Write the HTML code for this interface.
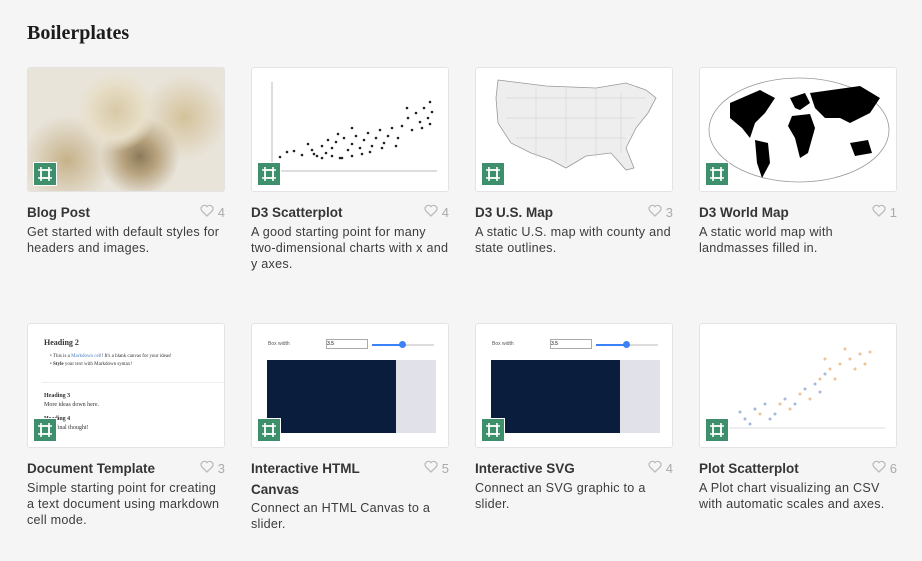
<!DOCTYPE html>
<html><head><style>
body{margin:0;background:#f5f5f5;font-family:"Liberation Sans",sans-serif;width:922px;height:561px;overflow:hidden;position:relative}
h1{position:absolute;left:27px;top:22px;margin:0;font-family:"Liberation Serif",serif;font-size:20px;font-weight:bold;color:#1b1b1b}
.card{position:absolute;width:198px}
.img{position:relative;width:198px;height:125px;border:1px solid #e3e3e3;border-radius:3px;background:#fff;overflow:hidden;box-sizing:border-box}
.ic{position:absolute;left:5px;bottom:5px;width:22px;height:22px;background:#3e8f6c;border:1px solid #fff}
.t{display:flex;justify-content:space-between;margin-top:10px;font-size:13.5px;font-weight:bold;color:#353535;line-height:21px}
.t span.h{font-weight:normal;color:#aaa;font-size:13px;white-space:nowrap}
.d{font-size:12.6px;letter-spacing:0.25px;color:#3c3c3c;line-height:16px;margin-top:1px}
</style></head><body>
<h1>Boilerplates</h1>
<svg width="0" height="0" style="position:absolute"><defs><symbol id="g" viewBox="0 0 22 22"><path d="M7 4v14M15 4v14M4 7h14M4 15h14" stroke="#fff" stroke-width="1.6" fill="none"/><rect x="7" y="7" width="8" height="8" fill="none" stroke="#fff" stroke-width="1.6"/></symbol><symbol id="hh" viewBox="0 0 14 13"><path d="M7 12 1.8 6.8A3 3 0 0 1 7 2.6a3 3 0 0 1 5.2 4.2Z" fill="none" stroke="#bbb" stroke-width="1.3"/></symbol></defs></svg>

<div class="card" style="left:27px;top:67px"><div class="img" style="background:radial-gradient(circle at 45% 35%,#d8c9a6 0,#e8dfc9 20%,transparent 30%),radial-gradient(circle at 20% 75%,#c6b28a 0,transparent 25%),radial-gradient(circle at 57% 72%,#8b7a5a 0,#b7a27d 12%,transparent 28%),radial-gradient(circle at 80% 40%,#d4c29b 0,transparent 25%),#e9e4da"><div class="ic"><svg width="22" height="22"><use href="#g"/></svg></div></div>
<div class="t">Blog Post<span class="h"><svg width="14" height="13"><use href="#hh"/></svg> 4</span></div><div class="d">Get started with default styles for headers and images.</div></div>

<div class="card" style="left:251px;top:67px"><div class="img"><svg width="198" height="125" style="position:absolute;left:0;top:0"><path d="M20 14V103H185" stroke="#bbb" fill="none"/><g fill="#222">
<circle cx="28" cy="89" r="1.3"/><circle cx="35" cy="84" r="1.3"/><circle cx="42" cy="83" r="1.3"/><circle cx="50" cy="87" r="1.3"/><circle cx="56" cy="76" r="1.3"/><circle cx="60" cy="82" r="1.3"/><circle cx="65" cy="88" r="1.3"/><circle cx="70" cy="78" r="1.3"/><circle cx="74" cy="85" r="1.3"/><circle cx="80" cy="80" r="1.3"/><circle cx="84" cy="74" r="1.3"/><circle cx="88" cy="90" r="1.3"/><circle cx="92" cy="70" r="1.3"/><circle cx="96" cy="82" r="1.3"/><circle cx="100" cy="76" r="1.3"/><circle cx="104" cy="68" r="1.3"/><circle cx="108" cy="80" r="1.3"/><circle cx="112" cy="72" r="1.3"/><circle cx="116" cy="65" r="1.3"/><circle cx="120" cy="78" r="1.3"/><circle cx="124" cy="70" r="1.3"/><circle cx="128" cy="62" r="1.3"/><circle cx="132" cy="75" r="1.3"/><circle cx="136" cy="68" r="1.3"/><circle cx="140" cy="60" r="1.3"/><circle cx="146" cy="70" r="1.3"/><circle cx="150" cy="58" r="1.3"/><circle cx="156" cy="50" r="1.3"/><circle cx="160" cy="62" r="1.3"/><circle cx="164" cy="45" r="1.3"/><circle cx="168" cy="54" r="1.3"/><circle cx="172" cy="40" r="1.3"/><circle cx="176" cy="50" r="1.3"/><circle cx="178" cy="34" r="1.3"/><circle cx="180" cy="44" r="1.3"/><circle cx="155" cy="40" r="1.3"/><circle cx="90" cy="90" r="1.3"/><circle cx="100" cy="88" r="1.3"/><circle cx="110" cy="86" r="1.3"/><circle cx="118" cy="84" r="1.3"/><circle cx="80" cy="88" r="1.3"/><circle cx="76" cy="72" r="1.3"/><circle cx="70" cy="90" r="1.3"/><circle cx="62" cy="86" r="1.3"/><circle cx="130" cy="80" r="1.3"/><circle cx="144" cy="78" r="1.3"/><circle cx="170" cy="60" r="1.3"/><circle cx="178" cy="56" r="1.3"/><circle cx="100" cy="60" r="1.3"/><circle cx="86" cy="66" r="1.3"/>
</g></svg><div class="ic"><svg width="22" height="22"><use href="#g"/></svg></div></div>
<div class="t">D3 Scatterplot<span class="h"><svg width="14" height="13"><use href="#hh"/></svg> 4</span></div><div class="d">A good starting point for many two-dimensional charts with x and y axes.</div></div>

<div class="card" style="left:475px;top:67px"><div class="img"><svg width="198" height="125" style="position:absolute;left:0;top:0"><path d="M22 12 70 18 120 20 150 15 170 22 180 30 172 45 160 60 150 80 158 100 150 102 135 85 110 88 90 100 75 92 55 85 35 75 22 55 20 30Z" fill="#eee" stroke="#999" stroke-width="0.8"/><path d="M30 30h140M30 50h130M40 70h110M60 20v70M90 20v75M120 20v70M145 25v60" stroke="#ccc" stroke-width="0.5"/></svg><div class="ic"><svg width="22" height="22"><use href="#g"/></svg></div></div>
<div class="t">D3 U.S. Map<span class="h"><svg width="14" height="13"><use href="#hh"/></svg> 3</span></div><div class="d">A static U.S. map with county and state outlines.</div></div>

<div class="card" style="left:699px;top:67px"><div class="img"><svg width="198" height="125" style="position:absolute;left:0;top:0"><ellipse cx="99" cy="62" rx="90" ry="52" fill="#fff" stroke="#999" stroke-width="0.8"/><g fill="#000"><path d="M30 35 60 22 75 30 65 45 55 55 50 70 42 60 30 50Z"/><path d="M55 72 68 75 70 95 62 110 57 95Z"/><path d="M90 30 105 25 110 35 100 42 95 40Z"/><path d="M92 48 110 46 115 60 108 85 100 90 95 70 88 58Z"/><path d="M110 25 160 18 180 30 170 45 150 55 140 50 125 50 115 40Z"/><path d="M150 75 168 72 172 85 155 88Z"/></g></svg><div class="ic"><svg width="22" height="22"><use href="#g"/></svg></div></div>
<div class="t">D3 World Map<span class="h"><svg width="14" height="13"><use href="#hh"/></svg> 1</span></div><div class="d">A static world map with<br>landmasses filled in.</div></div>

<div class="card" style="left:27px;top:323px"><div class="img" style="font-family:'Liberation Serif',serif;color:#333"><div style="position:absolute;left:16px;top:14px;font-size:8px;font-weight:bold">Heading 2</div><div style="position:absolute;left:22px;top:29px;font-size:5px;line-height:8px">• This is a <span style="color:#4a7fc0">Markdown cell</span>! It's a blank canvas for your ideas!<br>• <b>Style</b> your text with Markdown syntax!</div><div style="position:absolute;left:14px;right:0;top:58px;border-top:1px solid #eee"></div><div style="position:absolute;left:16px;top:68px;font-size:6px;line-height:9px"><b>Heading 3</b><br>More ideas down here.<br><br><b style="position:relative;top:-4px">Heading 4</b><br><span style="position:relative;top:-4px">… a final thought!</span></div><div class="ic"><svg width="22" height="22"><use href="#g"/></svg></div></div>
<div class="t">Document Template<span class="h"><svg width="14" height="13"><use href="#hh"/></svg> 3</span></div><div class="d">Simple starting point for creating a text document using markdown cell mode.</div></div>

<div class="card" style="left:251px;top:323px"><div class="img"><div style="position:absolute;left:16px;top:17px;font-size:5px;color:#555">Box width</div><div style="position:absolute;left:74px;top:15px;width:40px;height:8px;border:1px solid #aaa;font-size:5px;line-height:8px">3.5</div><div style="position:absolute;left:120px;top:20px;width:62px;height:2px;background:#ddd"></div><div style="position:absolute;left:120px;top:20px;width:30px;height:2px;background:#3b82f6"></div><div style="position:absolute;left:147px;top:17px;width:7px;height:7px;border-radius:50%;background:#3b82f6"></div><div style="position:absolute;left:15px;top:36px;width:169px;height:73px;background:#e1e2e9"></div><div style="position:absolute;left:15px;top:36px;width:129px;height:73px;background:#0b1d3d"></div><div class="ic"><svg width="22" height="22"><use href="#g"/></svg></div></div>
<div class="t">Interactive HTML<br>Canvas<span class="h"><svg width="14" height="13"><use href="#hh"/></svg> 5</span></div><div class="d" style="margin-top:0">Connect an HTML Canvas to a slider.</div></div>

<div class="card" style="left:475px;top:323px"><div class="img"><div style="position:absolute;left:16px;top:17px;font-size:5px;color:#555">Box width</div><div style="position:absolute;left:74px;top:15px;width:40px;height:8px;border:1px solid #aaa;font-size:5px;line-height:8px">3.5</div><div style="position:absolute;left:120px;top:20px;width:62px;height:2px;background:#ddd"></div><div style="position:absolute;left:120px;top:20px;width:30px;height:2px;background:#3b82f6"></div><div style="position:absolute;left:147px;top:17px;width:7px;height:7px;border-radius:50%;background:#3b82f6"></div><div style="position:absolute;left:15px;top:36px;width:169px;height:73px;background:#e1e2e9"></div><div style="position:absolute;left:15px;top:36px;width:129px;height:73px;background:#0b1d3d"></div><div class="ic"><svg width="22" height="22"><use href="#g"/></svg></div></div>
<div class="t">Interactive SVG<span class="h"><svg width="14" height="13"><use href="#hh"/></svg> 4</span></div><div class="d">Connect an SVG graphic to a<br>slider.</div></div>

<div class="card" style="left:699px;top:323px"><div class="img"><svg width="198" height="125" style="position:absolute;left:0;top:0"><g fill="#e8a86a" opacity=".7"><circle cx="60" cy="90" r="1.5"/><circle cx="80" cy="80" r="1.5"/><circle cx="100" cy="70" r="1.5"/><circle cx="120" cy="55" r="1.5"/><circle cx="130" cy="45" r="1.5"/><circle cx="140" cy="40" r="1.5"/><circle cx="150" cy="35" r="1.5"/><circle cx="160" cy="30" r="1.5"/><circle cx="165" cy="40" r="1.5"/><circle cx="145" cy="25" r="1.5"/><circle cx="135" cy="55" r="1.5"/><circle cx="155" cy="45" r="1.5"/><circle cx="110" cy="75" r="1.5"/><circle cx="125" cy="35" r="1.5"/><circle cx="170" cy="28" r="1.5"/><circle cx="90" cy="85" r="1.5"/></g><g fill="#7f9cc8" opacity=".7"><circle cx="45" cy="95" r="1.5"/><circle cx="55" cy="85" r="1.5"/><circle cx="65" cy="80" r="1.5"/><circle cx="75" cy="90" r="1.5"/><circle cx="85" cy="75" r="1.5"/><circle cx="95" cy="80" r="1.5"/><circle cx="105" cy="65" r="1.5"/><circle cx="115" cy="60" r="1.5"/><circle cx="125" cy="50" r="1.5"/><circle cx="70" cy="95" r="1.5"/><circle cx="50" cy="100" r="1.5"/><circle cx="120" cy="68" r="1.5"/><circle cx="40" cy="88" r="1.5"/></g><path d="M20 104H185" stroke="#ddd"/></svg><div class="ic"><svg width="22" height="22"><use href="#g"/></svg></div></div>
<div class="t">Plot Scatterplot<span class="h"><svg width="14" height="13"><use href="#hh"/></svg> 6</span></div><div class="d">A Plot chart visualizing an CSV with automatic scales and axes.</div></div>
</body></html>
